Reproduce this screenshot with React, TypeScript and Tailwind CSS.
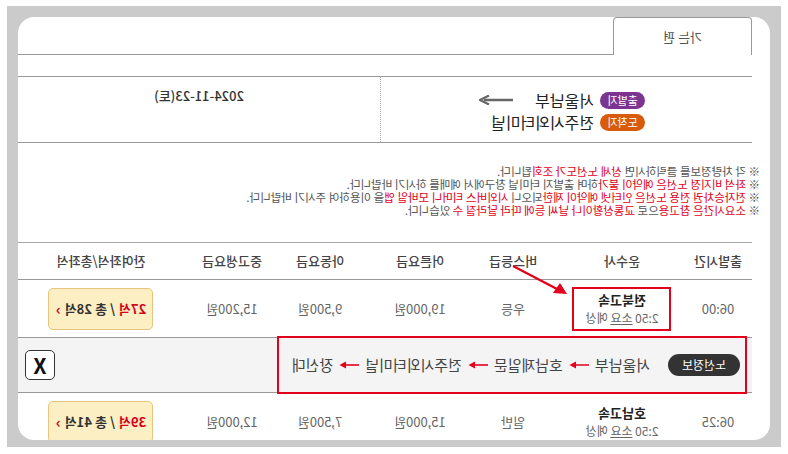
import React from 'react';

const COLS = 'grid grid-cols-[68px_124px_94px_92px_108px_68px_1fr]';

const HEADERS = ['출발시간', '운수사', '버스등급', '어른요금', '아동요금', '중고생요금', '잔여좌석/총좌석'];

type Bus = {
  time: string;
  company: string;
  grade: string;
  adult: string;
  child: string;
  teen: string;
  left: string;
  total: string;
};

const BUSES: Bus[] = [
  { time: '06:00', company: '전북고속', grade: '우등', adult: '19,000원', child: '9,500원', teen: '15,200원', left: '27석', total: '총 28석' },
  { time: '06:25', company: '호남고속', grade: '일반', adult: '15,000원', child: '7,500원', teen: '12,000원', left: '39석', total: '총 41석' },
];

const STOPS = ['서울남부', '호남제일문', '전주시외터미널', '장신대'];

function SeatButton({ left, total }: { left: string; total: string }) {
  return (
    <div className="w-[105px] h-[42px] rounded-[5px] bg-[#fdefc4] border border-[#e8c47c] flex items-center justify-center text-[13px] font-bold text-[#333] gap-1">
      <span className="text-[#d6001c]">{left}</span>
      <span>/ {total}</span>
      <span className="text-[#d6001c] text-[15px] leading-none">›</span>
    </div>
  );
}

function Company({ name }: { name: string }) {
  return (
    <>
      <span className="text-[13px] font-bold text-[#222] leading-[18px]">{name}</span>
      <span className="text-[12px] text-[#666] leading-[18px]">
        2:50 <span className="underline">소요</span> 예상
      </span>
    </>
  );
}

function BusRow({ bus, boxed }: { bus: Bus; boxed?: boolean }) {
  return (
    <div className={`${COLS} h-[57px] items-center text-[13px] text-[#666] text-center`}>
      <span>{bus.time}</span>
      <div className="flex justify-center">
        {boxed ? (
          <div className="w-[99px] h-[44px] border-2 border-[#e3001b] flex flex-col items-center justify-center">
            <Company name={bus.company} />
          </div>
        ) : (
          <div className="flex flex-col items-center">
            <Company name={bus.company} />
          </div>
        )}
      </div>
      <span>{bus.grade}</span>
      <span>{bus.adult}</span>
      <span>{bus.child}</span>
      <span>{bus.teen}</span>
      <div className="flex justify-center pl-[14px]">
        <SeatButton left={bus.left} total={bus.total} />
      </div>
    </div>
  );
}

function RedArrow() {
  return (
    <svg width="20" height="8" viewBox="0 0 20 8" className="shrink-0">
      <line x1="0" y1="4" x2="15" y2="4" stroke="#e3001b" strokeWidth="1.6" />
      <path d="M13 0.5 L19.5 4 L13 7.5 Z" fill="#e3001b" />
    </svg>
  );
}

export default function App() {
  return (
    <div
      className="w-[788px] h-[454px] bg-white pt-[6px] pl-[7px] [transform:scaleX(-1)]"
      style={{ fontFamily: '"Noto Sans CJK KR", "Noto Sans", sans-serif' }}
    >
      <div className="w-[774px] h-[441px] bg-[#cbcbcb] pt-[11px] pl-[11px]">
        <div className="relative w-[752px] h-[423px] bg-white rounded-[16px] overflow-hidden pl-[18px]">
          {/* tabs */}
          <div className="flex items-end h-[38px]">
            <div className="w-[139px] h-[38px] border border-b-0 border-[#999] rounded-t-[4px] flex items-center justify-center text-[13px] text-[#555]">
              가는 편
            </div>
            <div className="flex-1 border-b border-[#999]" />
          </div>

          <div className="h-[21px]" />

          {/* route summary */}
          <div className="flex h-[67px] border-t border-b border-[#999]">
            <div className="w-[372px] border-r border-dotted border-[#aaa] pl-[107px] pt-[14px] flex flex-col gap-[4px]">
              <div className="flex items-center h-[18px] gap-[6px]">
                <span className="w-[45px] h-[17px] rounded-full bg-[#7b3590] text-white text-[11px] leading-none flex items-center justify-center">
                  출발지
                </span>
                <span className="text-[16px] text-[#222] leading-none">서울남부</span>
                <svg width="34" height="10" viewBox="0 0 34 10" className="ml-[16px]">
                  <line x1="0" y1="5" x2="29" y2="5" stroke="#666" strokeWidth="2.4" />
                  <path d="M24 0.5 L33 5 L24 9.5" fill="none" stroke="#666" strokeWidth="2.2" />
                </svg>
              </div>
              <div className="flex items-center h-[18px] gap-[6px]">
                <span className="w-[45px] h-[17px] rounded-full bg-[#d85a0b] text-white text-[11px] leading-none flex items-center justify-center">
                  도착지
                </span>
                <span className="text-[16px] text-[#222] leading-none">전주시외터미널</span>
              </div>
            </div>
            <div className="flex-1 flex justify-center pt-[9px] text-[13px] font-medium text-[#333]">2024-11-23(토)</div>
          </div>

          {/* notices */}
          <div className="h-[99px] pt-[22px] -ml-[8px] text-[11.5px] leading-[13px] text-[#555]">
            <p>
              ※ 각 차량정보를 클릭하시면 <span className="text-[#e3001b]">상세 노선도가 조회</span>됩니다.
            </p>
            <p>
              ※ <span className="text-[#e3001b]">좌석 비지정 노선은 예약이 불가</span>하며 출발지 터미널 창구에서 예매를 하시기 바랍니다.
            </p>
            <p>
              ※ <span className="text-[#e3001b]">전자승차권 전용 노선은 인터넷 예약이 제한</span>되오니{' '}
              <span className="text-[#e3001b]">시외버스 티머니 모바일 앱</span>을 이용하여 주시기 바랍니다.
            </p>
            <p>
              ※ <span className="text-[#e3001b]">소요시간은 참고용</span>으로{' '}
              <span className="text-[#e3001b]">교통상황이나 날씨 등에 따라 달라질 수</span> 있습니다.
            </p>
          </div>

          {/* table */}
          <div className={`${COLS} h-[38px] items-center border-t border-b border-[#aaa] border-b-[#999] text-[13px] text-[#444] font-medium text-center`}>
            {HEADERS.map((h, i) => (
              <span key={h} className={i === 6 ? 'pl-[14px]' : ''}>
                {h}
              </span>
            ))}
          </div>

          <BusRow bus={BUSES[0]} boxed />

          <div className="h-[56px] bg-[#f4f4f4] border-t border-b border-[#999] flex items-center pl-[5px]">
            <div className="w-[470px] h-[58px] border-2 border-[#e3001b] flex items-center pl-[5px] gap-[6px]">
              <span className="w-[72px] h-[22px] rounded-full bg-[#333] text-white text-[12px] flex items-center justify-center mr-[12px]">
                노선정보
              </span>
              {STOPS.map((s, i) => (
                <React.Fragment key={s}>
                  {i > 0 && <RedArrow />}
                  <span className="text-[15px] text-[#444]">{s}</span>
                </React.Fragment>
              ))}
            </div>
            <div className="ml-auto mr-[7px] w-[30px] h-[30px] rounded-[5px] border-[1.5px] border-[#333] bg-white flex items-center justify-center text-[21px] font-bold text-[#111] leading-none">
              X
            </div>
          </div>

          <BusRow bus={BUSES[1]} />

          {/* annotation arrow */}
          <svg className="absolute left-[195px] top-[243px]" width="70" height="40" viewBox="0 0 70 40">
            <line x1="62" y1="6" x2="18" y2="29" stroke="#e3001b" strokeWidth="2.4" />
            <path d="M8 34 L15 23 L22 33 Z" fill="#e3001b" />
          </svg>
        </div>
      </div>
    </div>
  );
}
